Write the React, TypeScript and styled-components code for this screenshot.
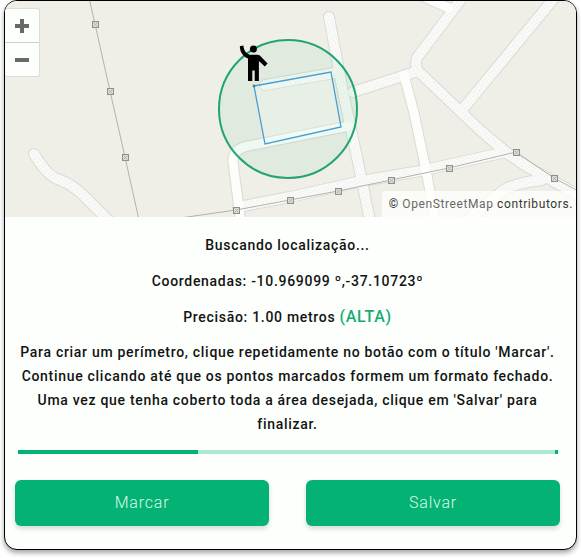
import React from "react";
import styled, { createGlobalStyle } from "styled-components";

const GlobalStyle = createGlobalStyle`
  *, *::before, *::after { box-sizing: border-box; }
  body {
    margin: 0;
    background: #ffffff;
    font-family: Roboto, "Liberation Sans", sans-serif;
    letter-spacing: 0.05em;
    color: #111412;
  }
`;

const Card = styled.main`
  margin: 0 4px 8px;
  border: 1px solid #000000;
  border-radius: 13px;
  overflow: hidden;
  background: #fdfffd;
  box-shadow: 0 3px 5px rgba(0, 0, 0, 0.35);
`;

const MapArea = styled.section`
  position: relative;
  height: 216px;
  background: #efeee7;
`;

const MapDrawing = styled.svg`
  display: block;
  width: 100%;
  height: 100%;
`;

const ZoomControl = styled.div`
  position: absolute;
  top: 7px;
  left: 0;
  width: 35px;
  display: flex;
  flex-direction: column;
  gap: 1px;
  border: 1px solid #dddcd6;
  border-left: 0;
  border-radius: 3px;
  overflow: hidden;
  background: #cfcfca;
`;

const ZoomButton = styled.button`
  display: flex;
  align-items: center;
  justify-content: center;
  height: 33px;
  padding: 0;
  border: 0;
  background: #fdfffd;
  cursor: pointer;
`;

const Attribution = styled.div`
  position: absolute;
  right: 0;
  bottom: 0;
  padding: 0 3px 0 7px;
  border-top-left-radius: 4px;
  background: rgba(255, 255, 252, 0.75);
  color: #333735;
  font-size: 12px;
  line-height: 26px;
  letter-spacing: 0.05em;
  white-space: nowrap;
`;

const AttributionLink = styled.a`
  color: #666a68;
  text-decoration: none;
`;

const Content = styled.section`
  padding: 16px 16px 23px 10px;
  text-align: center;
`;

const Status = styled.div`
  display: flex;
  flex-direction: column;
  gap: 12px;
`;

const Line = styled.p`
  margin: 0;
  font-size: 14px;
  font-weight: 500;
  line-height: 24px;
  letter-spacing: 0.05em;
`;

const Instructions = styled(Line)`
  margin-top: 11px;
`;

const Precision = styled.span`
  color: #12ad70;
  font-size: 16px;
  line-height: 16px;
`;

const Progress = styled.div`
  display: flex;
  justify-content: space-between;
  height: 4px;
  margin: 14px 2px 26px 3px;
  background: #ade8d2;
`;

const ProgressFill = styled.div`
  background: #04b374;
`;

const ProgressEnd = styled.div`
  width: 3px;
  background: #04b374;
`;

const Actions = styled.div`
  display: grid;
  grid-template-columns: 1fr 1fr;
  gap: 37px;
`;

const ActionButton = styled.button`
  height: 46px;
  padding: 0 12px 2px;
  border: 0;
  border-radius: 6px;
  background: #04b374;
  color: #d8f8e9;
  font-family: inherit;
  font-size: 16px;
  font-weight: 300;
  letter-spacing: 0.05em;
  box-shadow: 0 3px 5px rgba(0, 0, 0, 0.14);
  cursor: pointer;
`;

const pavedRoads = [
  "M34 154 C40 164 46 173 55 178 C66 182 74 186 84 196 L110 222",
  "M329 17 L343 92 L362 181 L371 226",
  "M265 85 L334 73",
  "M238 207 L290 197 L362 181 L420 171 L506 152",
  "M353 92 L381 83 L418 71",
  "M418 72 C415 65 415 60 419 55 L453 10 L464 -5",
  "M418 71 L461 112 Q480 131 506 152 Q525 167 544 176 L580 196",
  "M462 110 L556 -4",
  "M542 180 Q515 183 504 190 Q495 196 488 203 L466 222",
];

const smoothRoads = [
  "M241 224 L233 162 Q232 149 248 146 L349 126",
  "M419 -5 L449 8",
  "M404 75 L414 113 L426 170 L436 224",
];

const powerLines = [
  "M89 -2 L95 24 L110 91 L125 157 L139 220",
  "M180 218 L236 210 L290 200 L338 191 L391 180 L449 168 L516 152 L554 178 L580 192",
];

const pylons = [
  [95, 24], [110, 91], [125, 157], [236, 210], [290, 200],
  [338, 191], [391, 180], [449, 168], [516, 152], [554, 178],
];

function StreetMap() {
  return (
    <MapDrawing viewBox="5 1 571 216" preserveAspectRatio="xMidYMid slice" role="img" aria-label="Mapa">
      <defs>
        <pattern id="gravel" width="9" height="8" patternUnits="userSpaceOnUse">
          <rect width="9" height="8" fill="#f9faf7" />
          <path
            d="M1 1h1M4 0h1M7 2h1M2 3h1M5 4h1M8 5h1M0 6h1M3 6h1M6 7h1"
            transform="translate(0 .5)"
            stroke="#ecedea"
          />
        </pattern>
      </defs>
      <g fill="none" strokeLinecap="round" strokeLinejoin="round">
        <g stroke="#dbdad5" strokeWidth="12">
          {pavedRoads.map((d) => <path key={d} d={d} />)}
          {smoothRoads.map((d) => <path key={d} d={d} strokeWidth="11" />)}
        </g>
        <g stroke="url(#gravel)" strokeWidth="10">
          {pavedRoads.map((d) => <path key={d} d={d} />)}
        </g>
        <g stroke="#fdfefc" strokeWidth="9">
          {smoothRoads.map((d) => <path key={d} d={d} />)}
        </g>
        <g stroke="#b2b3ad">
          {powerLines.map((d) => <path key={d} d={d} />)}
        </g>
      </g>
      {pylons.map(([x, y]) => (
        <g key={`${x}-${y}`} stroke="#8e908b">
          <rect x={x - 2.5} y={y - 2.5} width="6" height="6" fill="#dcddd8" />
          <path d={`M${x - 1.5} ${y - 1.5}l4 4m0-4l-4 4`} stroke="#b0b2ad" />
        </g>
      ))}
      <circle cx="288" cy="109" r="69" fill="#22b36f" fillOpacity=".07" stroke="#1fa573" strokeWidth="2" />
      <path d="M254 86L331 72L341 127L265 144Z" fill="#fff" fillOpacity=".25" stroke="#469fd0" strokeWidth="1.3" />
      <circle cx="254" cy="86" r="1.4" fill="#527889" />
      <g fill="#000">
        <circle cx="253.4" cy="49" r="3.5" />
        <path d="M239.8 46.2L243.4 45.4C243.8 50 246 53.5 250 54.7H257.5C259 54.8 259.8 55.3 260.8 56.4L267.6 63.6L264.8 66.5L258.9 61V81H254.7V70.5H252.3V81H248V58.5C243 56.5 239.9 52 239.8 46.2Z" />
      </g>
    </MapDrawing>
  );
}

export default function App() {
  const progress = 1 / 3;
  return (
    <>
      <GlobalStyle />
      <Card>
        <MapArea>
          <StreetMap />
          <ZoomControl>
            <ZoomButton type="button" aria-label="Aumentar zoom">
              <svg width="14" height="14" viewBox="0 0 14 14" stroke="#686a67" strokeWidth="4">
                <path d="M0 7H14M7 0V14" />
              </svg>
            </ZoomButton>
            <ZoomButton type="button" aria-label="Diminuir zoom">
              <svg width="14" height="14" viewBox="0 0 14 14" stroke="#686a67" strokeWidth="4">
                <path d="M0 7H14" />
              </svg>
            </ZoomButton>
          </ZoomControl>
          <Attribution>
            © <AttributionLink href="#openstreetmap">OpenStreetMap</AttributionLink> contributors.
          </Attribution>
        </MapArea>
        <Content>
          <Status>
            <Line>Buscando localização...</Line>
            <Line>Coordenadas: -10.969099 º,-37.10723º</Line>
            <Line>
              Precisão: 1.00 metros <Precision>(ALTA)</Precision>
            </Line>
          </Status>
          <Instructions>
            Para criar um perímetro, clique repetidamente no botão com o título 'Marcar'. Continue
            clicando até que os pontos marcados formem um formato fechado. Uma vez que tenha coberto
            toda a área desejada, clique em 'Salvar' para finalizar.
          </Instructions>
          <Progress role="progressbar" aria-label="Buscando localização" aria-valuenow={33} aria-valuemin={0} aria-valuemax={100}>
            <ProgressFill style={{ width: `${progress * 100}%` }} />
            <ProgressEnd />
          </Progress>
          <Actions>
            <ActionButton type="button">Marcar</ActionButton>
            <ActionButton type="button">Salvar</ActionButton>
          </Actions>
        </Content>
      </Card>
    </>
  );
}
